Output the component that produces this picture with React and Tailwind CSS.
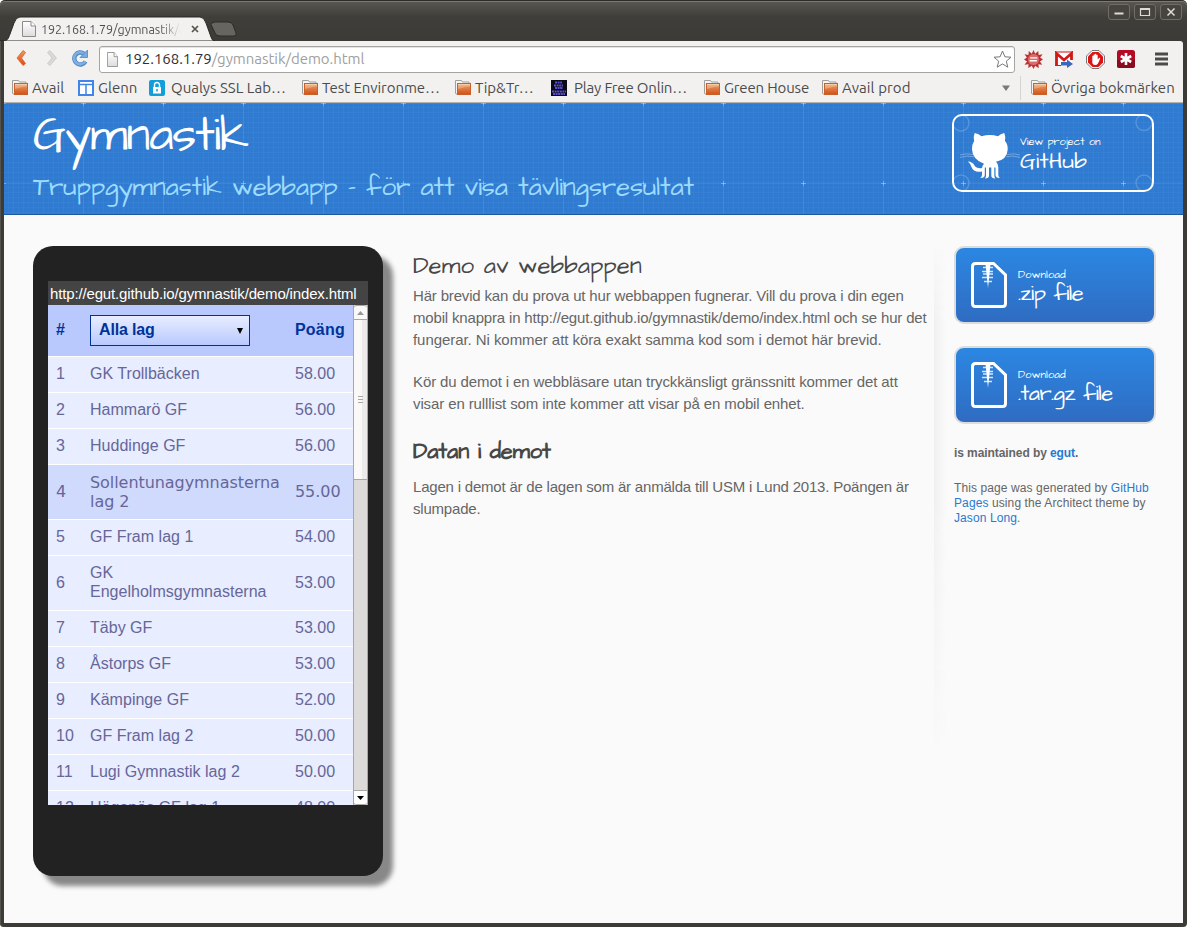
function Folder() {
  return (
    <svg className="size-4 shrink-0" viewBox="0 0 16 16">
      <defs>
        <linearGradient id="folder" x1="0" y1="0" x2="0" y2="1">
          <stop offset="0" stopColor="#eda268" />
          <stop offset="1" stopColor="#d2501a" />
        </linearGradient>
      </defs>
      <path d="M.5 13.500V.5h6l1 1.500h6.500v3M.5 13.500l2 1" fill="#f4f4f4" stroke="#a09f9c" />
      <rect x="2.500" y="3.500" width="13" height="11" fill="url(#folder)" stroke="#c8602a" />
      <path d="M3 4.500h12" stroke="#f8cfa4" />
      <path d="M3 9V5h12v1.500C10 6.500 7 8 3 9z" fill="#fff" opacity=".25" />
    </svg>
  );
}

function PageIcon({ className }) {
  return (
    <svg className={className} viewBox="0 0 14 16" preserveAspectRatio="none">
      <defs>
        <linearGradient id="page" x1="0" y1="0" x2="0" y2="1">
          <stop offset="0" stopColor="#fff" />
          <stop offset="1" stopColor="#dcdcdc" />
        </linearGradient>
      </defs>
      <path d="M.5.5h8.500l4.500 4.500v10.500H.5z" fill="url(#page)" stroke="#8b8b8b" />
      <path d="M9 .5V5h4.500" fill="#fff" stroke="#8b8b8b" />
    </svg>
  );
}

function WindowButton({ children }) {
  return (
    <div className="flex h-4 w-[22px] items-center justify-center rounded-[3px] border border-[#6f6d66] bg-[#45443f]">
      <svg className="h-3 w-4" viewBox="0 0 16 12" fill="none" stroke="#dfdbd2" strokeWidth="1.500">
        {children}
      </svg>
    </div>
  );
}

function TitleBar() {
  return (
    <div className="flex h-[41px] shrink-0 justify-between rounded-t-[5px] border-t border-[#2c2b28] bg-linear-to-b from-[#5a5850] via-[#3f3e39] via-40% to-[#3c3b37] shadow-[inset_0_1px_0_#7b7a76]">
      <div className="relative flex h-[41px] w-[245px]">
        <svg className="absolute top-0 left-0 h-10 w-[245px]" viewBox="0 0 245 40">
          <path d="M211 23.500q1-2.500 4-2.500h13q4 0 5 3l3 8q1 3-2 3h-14q-4 0-5-3z" fill="#66655f" stroke="#2d2c29" />
          <path d="M0 40h4c4-1 4-2 6-7l4-11q2-6 6-6h180q4 0 6 6l5 14q1 4 4 4z" fill="#f2f1f0" stroke="#2a2926" strokeWidth="1" />
        </svg>
        <div className="relative mt-[14px] flex h-[26px] w-full items-center pt-[2px] pl-[22px]">
          <PageIcon className="h-4 w-[14px]" />
          <div className="ml-[5px] w-[140px] overflow-hidden bg-linear-to-r from-[#4c4c4c] from-85% to-transparent bg-clip-text font-['Ubuntu',sans-serif] text-[12.5px] leading-4 tracking-[-0.05px] whitespace-nowrap text-transparent">
            192.168.1.79/gymnastik/demo.html
          </div>
          <svg className="ml-[10px] size-2" viewBox="0 0 8 8" stroke="#55534f" strokeWidth="1.700">
            <path d="M1 1l6 6M7 1L1 7" />
          </svg>
        </div>
      </div>
      <div className="mt-[3px] mr-[5px] flex gap-1">
        <WindowButton><path d="M3.500 7.500h9" strokeWidth="2" /></WindowButton>
        <WindowButton><path d="M3.500 2.500h9v7h-9z M3.500 3.500h9" strokeWidth="1.200" /></WindowButton>
        <WindowButton><path d="M4.500 2.500l7 7M11.500 2.500l-7 7" /></WindowButton>
      </div>
    </div>
  );
}

function Toolbar() {
  return (
    <div className="flex h-9 shrink-0 items-center rounded-tr-[3px] bg-[#f2f1f0] pl-[11px]">
      <svg className="mb-0.5 h-[18px] w-[80px] shrink-0" viewBox="0 0 80 18">
        <defs>
          <linearGradient id="back" x1="0" y1="0" x2="0" y2="1">
            <stop offset="0" stopColor="#ee9a5f" />
            <stop offset="1" stopColor="#dd4814" />
          </linearGradient>
        </defs>
        <path d="M11 1.500L5 9l6 7.500 2.500-2L9.500 9l4-5.500z" fill="url(#back)" transform="translate(-3 0)" stroke="#d9622c" strokeWidth=".8" strokeLinejoin="round" />
        <path d="M35 1.500L41.500 9 35 16.500l-2.500-2L37 9l-4.500-5.500z" fill="#dad9d7" stroke="#c9c8c6" strokeWidth=".8" strokeLinejoin="round" />
        <path d="M70.500 12.500A6 6 0 1 1 69 4.700" fill="none" stroke="#4e86c4" strokeWidth="4.400" />
        <path d="M70.200 12.300A6 6 0 1 1 69 4.700" fill="none" stroke="#80b0e2" strokeWidth="2.600" />
        <path d="M72.500 1v7.500H65z" fill="#78aadd" stroke="#4e86c4" strokeWidth=".8" />
      </svg>
      <div className="ml-1 flex h-[27px] w-[916px] items-center rounded-[3px] border border-[#a5a4a1] bg-white pl-[7px] shadow-[inset_0_1px_0_#e4e4e4]">
        <PageIcon className="h-[15px] w-[11px]" />
        <div className="ml-[7px] flex-1 font-['Ubuntu',sans-serif] text-[15px] leading-5 tracking-[-0.04px] text-[#a0a0a0]">
          <span className="text-[#2f2f2f]">192.168.1.79</span>/gymnastik/demo.html
        </div>
        <svg className="mr-[2px] size-[19px]" viewBox="0 0 19 19">
          <path d="M9.500 1l2.400 5.800 6.100.4-4.700 4 1.500 6-5.300-3.300L4.200 17.200l1.500-6L1 7.200l6.100-.4z" fill="#fff" stroke="#777" strokeLinejoin="round" />
        </svg>
      </div>
      <svg className="ml-[9px] size-[19px]" viewBox="0 0 20 20">
        <path d="M10 0l1.800 4L15 1l.4 4.200 4.200-.7L17 8l3 2-3.200 2 2.400 3.500-4-.5.3 4.300-3.700-2.800L10 20l-1.800-3.500L4.500 19l.3-4-4.300.5L3.200 12 0 10l3-2L.5 4.500l4.200.7L5 1l3.200 3z" fill="#b93232" />
        <circle cx="10" cy="10" r="5.800" fill="#dc6c6a" />
        <path d="M6.500 8.300h7.500M6 11.300h7.500" stroke="#fff" strokeWidth="1.500" />
      </svg>
      <svg className="ml-3 h-[17px] w-[18px]" viewBox="0 0 18 17">
        <path d="M1 1.500h16v13H1z" fill="#fff" />
        <path d="M1.500 15V2.500L9 9l7.500-6.500V9" fill="none" stroke="#d01818" strokeWidth="2.800" />
        <path d="M0 1h18M0 14.500h6" stroke="#d01818" />
        <path d="M6 11h6V8.500l6 4.500-6 4v-2.500H6z" fill="#3b68b8" />
      </svg>
      <svg className="ml-[13px] size-[19px]" viewBox="0 0 19 19">
        <path d="M6 .5h7L18.500 6v7L13 18.500H6L.5 13V6z" fill="#fff" stroke="#777" />
        <path d="M6.500 2h6L17 6.500v6L12.500 17h-6L2 12.500v-6z" fill="#dc1414" />
        <path d="M6.300 9.500V6q.8-.8 1.300 0V4.700q.8-.8 1.400 0V4q.7-.6 1.300 0v1q.8-.6 1.400 0v4.500l1.300-1.500q1-.4 1.200.4L12 13.500q-1 1.500-3 1.500t-2.700-2z" fill="#fff" />
      </svg>
      <svg className="ml-3 size-[18px]" viewBox="0 0 18 18">
        <rect width="18" height="18" rx="2.500" fill="#b30a26" />
        <path d="M0 10h18v5.500a2.500 2.500 0 0 1-2.500 2.500h-13A2.500 2.500 0 0 1 0 15.500z" fill="#8c0a1e" />
        <path d="M9 3v12M3.800 6l10.400 6M14.200 6L3.800 12" stroke="#fff" strokeWidth="2.600" />
      </svg>
      <svg className="ml-5 h-[14px] w-[13px]" viewBox="0 0 13 14" stroke="#4a4a46" strokeWidth="2.800">
        <path d="M0 2h13M0 7h13M0 12h13" />
      </svg>
    </div>
  );
}

function Bookmark({ className, icon, children }) {
  return (
    <div className={"flex shrink-0 items-center gap-1 whitespace-nowrap " + className}>
      {icon}
      <span>{children}</span>
    </div>
  );
}

function BookmarkBar() {
  return (
    <div className="flex h-[26px] shrink-0 items-center border-b border-[#b5b2ae] bg-[#f2f1f0] pb-1 pl-2 font-['Ubuntu',sans-serif] text-[15px] leading-5 text-[#4c4c4c]">
      <Bookmark className="w-[66px]" icon={<Folder />}>Avail</Bookmark>
      <Bookmark className="w-[71px]" icon={
        <svg className="size-4" viewBox="0 0 16 16"><path d="M1 1h14v14H1z" fill="#fff" stroke="#4285e8" strokeWidth="2" /><path d="M1 4.500h14M8 4v11" stroke="#4285e8" strokeWidth="1.500" /></svg>
      }>Glenn</Bookmark>
      <Bookmark className="w-[153px]" icon={
        <svg className="mr-[2px] size-4" viewBox="0 0 16 16"><rect width="16" height="16" rx="2" fill="#119fdc" /><path d="M5.500 7.500V5a2.500 2.500 0 0 1 5 0v2.500" fill="none" stroke="#fff" strokeWidth="1.400" /><rect x="4" y="7" width="8" height="6.500" fill="#fff" /><path d="M8 9v2.500" stroke="#119fdc" strokeWidth="1.500" /></svg>
      }>Qualys SSL Lab…</Bookmark>
      <Bookmark className="w-[153px] tracking-[-0.06px]" icon={<Folder />}>Test Environme…</Bookmark>
      <Bookmark className="w-[96px]" icon={<Folder />}>Tip&amp;Tr…</Bookmark>
      <Bookmark className="w-[153px] tracking-[-0.18px]" icon={
        <svg className="mr-[3px] size-4" viewBox="0 0 16 16"><path d="M0 0h16v16H0z" fill="#0a0a18" /><path d="M4 2.500h7M3 5.500h9M4 8h8M1 11.500h14M2 14h12" stroke="#5a4fd0" strokeWidth="1.800" strokeDasharray="2 .6" /></svg>
      }>Play Free Onlin…</Bookmark>
      <Bookmark className="w-[118px] tracking-[-0.15px]" icon={<Folder />}>Green House</Bookmark>
      <Bookmark className="w-[180px] tracking-[0.1px]" icon={<Folder />}>Avail prod</Bookmark>
      <svg className="h-[6px] w-2 shrink-0" viewBox="0 0 8 6"><path d="M0 .5h8L4 6z" fill="#7a7975" /></svg>
      <div className="mx-[10px] h-6 w-px shrink-0 bg-[#d6d4d2]" />
      <Bookmark className="" icon={<Folder />}>Övriga bokmärken</Bookmark>
    </div>
  );
}

function Blueprint() {
  return (
    <svg className="absolute inset-0 h-full w-full">
      <defs>
        <pattern id="minor" width="10" height="10" patternUnits="userSpaceOnUse">
          <path d="M4.500 0v10M0 4.500h10" stroke="#fff" strokeOpacity=".02" />
          <path d="M9.500 0v10M0 9.500h10" stroke="#fff" strokeOpacity=".03" />
        </pattern>
        <pattern id="major" width="80" height="80" patternUnits="userSpaceOnUse">
          <path d="M79.500 0v80M0 .5h80" stroke="#fff" strokeOpacity=".06" />
          <path d="M77 .5h5M79.500 0v3M0 .5h2M79.500 78v2" stroke="#fff" strokeOpacity=".3" />
        </pattern>
      </defs>
      <rect width="100%" height="100%" fill="url(#minor)" />
      <rect width="100%" height="100%" fill="url(#major)" />
    </svg>
  );
}

function Octocat() {
  return (
    <svg className="mt-[6px] h-[48px] w-[60px] shrink-0" viewBox="0 0 60 48">
      <path d="M0 23q6-2 13-.5M0 25.500q7-2.500 14-.8M60 23q-6-2-13-.5M60 25.500q-7-2.500-14-.8" fill="none" stroke="#fff" strokeOpacity=".4" strokeWidth=".8" />
      <path d="M14.700 1Q19 2 21.500 4.200Q30 2 38 4.200Q40.500 2 44.300 1q1.600 4 .7 8Q48 12.500 47.700 17.500Q47.300 27.500 36 29.800q2.300 2 2.300 5.500v7.500q0 2 1.500 3.200-4.300 0-4.300-3v-7.500h-1.200v8q0 1.500 1 3-4 0-4-3v-8h-2.300v8q0 3-4 3 1-1.500 1-3v-8h-1.200v7.500q0 3-4.500 3 1.700-1.200 1.700-3.200v-3.300q-8.500 1.500-10.500-4.500-.8-3-3.500-5.500 4.500.3 6.500 4 2.200 3.500 7.500 2.600.3-2.500 2-4.300Q12.500 27.500 12 17.500q-.3-5 2.200-8.500Q13 5 14.700 1z" fill="#fff" />
    </svg>
  );
}

function GithubButton() {
  return (
    <a className="relative flex h-[78px] w-[202px] items-center overflow-hidden rounded-[10px] border-2 border-white pl-[6px] text-white">
      <svg className="absolute inset-0 h-full w-full" viewBox="0 0 198 74" fill="none" stroke="#fff" strokeOpacity=".18" strokeWidth="1.500">
        <circle cx="7" cy="7" r="8" /><circle cx="190" cy="6.500" r="8" /><circle cx="7" cy="67" r="8" /><circle cx="190" cy="67" r="8" />
      </svg>
      <Octocat />
      <div className="relative pt-[2px] font-['Architects_Daughter',cursive]">
        <div className="text-[11px] leading-[14px] tracking-[-0.07px]">View project on</div>
        <div className="text-[22.5px] leading-[25px] tracking-[0.2px]">GitHub</div>
      </div>
    </a>
  );
}

function DownloadButton({ name }) {
  return (
    <a className="flex h-[78px] w-[202px] items-center rounded-[10px] border-2 border-[#dcdcdc] bg-linear-to-b from-[#2b87e2] to-[#2f6cc2] pl-[15px] text-white">
      <svg className="h-[46px] w-9 shrink-0" viewBox="0 0 36 46">
        <path d="M4.500 1.500h18L34.500 13v28.500q0 3-3 3h-27q-3 0-3-3v-37q0-3 3-3z" fill="none" stroke="#fff" strokeWidth="3" />
        <path d="M14.500 2h5L17 26z" fill="#fff" />
        <path d="M12 5.500h10M11 9.500h11M12 12h10M11 15.500h11M13 19.500h8" stroke="#fff" strokeOpacity=".8" strokeWidth="1.300" />
      </svg>
      <div className="ml-[11px] pt-1 font-['Architects_Daughter',cursive]">
        <div className="text-[11px] leading-[14px] tracking-[0.1px]">Download</div>
        <div className="text-[22px] leading-6 tracking-[-0.56px]">{name}</div>
      </div>
    </a>
  );
}

const teams = [
  ['1', 'GK Trollbäcken', '58.00'],
  ['2', 'Hammarö GF', '56.00'],
  ['3', 'Huddinge GF', '56.00'],
  ['4', 'Sollentunagymnasterna lag 2', '55.00'],
  ['5', 'GF Fram lag 1', '54.00'],
  ['6', 'GK Engelholmsgymnasterna', '53.00'],
  ['7', 'Täby GF', '53.00'],
  ['8', 'Åstorps GF', '53.00'],
  ['9', 'Kämpinge GF', '52.00'],
  ['10', 'GF Fram lag 2', '50.00'],
  ['11', 'Lugi Gymnastik lag 2', '50.00'],
  ['12', 'Höganäs GF lag 1', '48.00'],
];

function ScrollBar() {
  return (
    <div className="flex w-[15px] shrink-0 flex-col border-x border-[#a9a7a3] bg-[#dcdbd9]">
      <div className="flex h-[15px] shrink-0 items-center justify-center rounded-t-[3px] border-y border-[#a9a7a3] bg-[#faf9f8]">
        <svg className="h-1 w-[7px]" viewBox="0 0 7 4"><path d="M0 4L3.500 0 7 4z" fill="#9a9893" /></svg>
      </div>
      <div className="flex h-40 shrink-0 items-center justify-center border-b border-[#a9a7a3] bg-linear-to-r from-[#faf9f8] from-60% to-[#ecebe9] to-60%">
        <div className="flex flex-col gap-[2px]">
          <div className="h-px w-[5px] bg-[#a9a7a3]" />
          <div className="h-px w-[5px] bg-[#a9a7a3]" />
          <div className="h-px w-[5px] bg-[#a9a7a3]" />
        </div>
      </div>
      <div className="flex-1" />
      <div className="flex h-[15px] shrink-0 items-center justify-center rounded-b-[3px] border-y border-[#a9a7a3] bg-white">
        <svg className="h-1 w-[7px]" viewBox="0 0 7 4"><path d="M0 0h7L3.500 4z" fill="#000" /></svg>
      </div>
    </div>
  );
}

function Phone() {
  return (
    <div className="h-[630px] w-[350px] shrink-0 rounded-[20px] bg-[#222] px-[15px] pt-[35px] shadow-[10px_10px_5px_#888]">
      <div className="flex h-6 items-center bg-[#444] pt-px pl-[2px] text-[15px] leading-5 tracking-[-0.15px] text-white">http://egut.github.io/gymnastik/demo/index.html</div>
      <div className="flex h-[500px] overflow-hidden bg-[#e8edff]">
        <div className="w-[305px] text-base leading-[19px] text-[#666699]">
          <div className="flex h-[51px] bg-[#b9c9fe] pl-2 font-bold text-[#003399]">
            <div className="w-[34px] pt-[15px]">#</div>
            <div className="w-[205px] pt-[10px]">
              <div className="flex h-[31px] w-40 items-center justify-between border border-[#003399] bg-linear-to-b from-[#e8edff] to-[#b9c9fe] pr-[6px] pb-[2px] pl-2">
                <span className="tracking-[-0.15px]">Alla lag</span>
                <svg className="mt-0.5 h-[6px] w-[6px]" viewBox="0 0 6 6"><path d="M0 0h6L3 6z" fill="#000" /></svg>
              </div>
            </div>
            <div className="pt-[15px] tracking-[0.2px]">Poäng</div>
          </div>
          {teams.map(([rank, name, points]) => (
            <div
              key={rank}
              className={
                "flex items-center border-t border-white pt-[7px] pb-[9px] pl-2 " +
                (rank === '4' ? "bg-[#d0dafd] font-['DejaVu_Sans',sans-serif] tracking-[-0.06px]" : "tracking-[0.02px]")
              }
            >
              <div className="w-[34px]">{rank}</div>
              <div className={rank === '4' ? "mt-px -mb-px w-[205px] pr-2" : "w-[205px] pr-2"}>{name}</div>
              <div>{points}</div>
            </div>
          ))}
        </div>
        <ScrollBar />
      </div>
    </div>
  );
}

export default function App() {
  return (
    <div className="flex h-[927px] w-[1187px] flex-col overflow-hidden bg-white font-['Liberation_Sans',Arial,sans-serif]">
      <TitleBar />
      <div className="flex min-h-0 flex-1 flex-col rounded-b-[4px] bg-[#3c3b37] px-1 pb-1 shadow-[inset_1px_0_0_#55534e]">
        <Toolbar />
        <BookmarkBar />
        <header className="relative flex h-[112px] shrink-0 justify-between border-b border-[#1e5ba6] bg-[#2f7bd1] px-[29px]">
          <Blueprint />
          <div className="relative font-['Architects_Daughter',cursive]">
            <h1 className="mt-[9px] text-5xl leading-[48px] tracking-[-1.2px] text-white">Gymnastik</h1>
            <h2 className="mt-[11px] text-[26px] leading-8 tracking-[-0.12px] text-[#9ddcff]">Truppgymnastik webbapp - för att visa tävlingsresultat</h2>
          </div>
          <div className="pt-[11px]"><GithubButton /></div>
        </header>
        <main className="flex flex-1 bg-[#fafafa] pt-[31px] pl-[29px]">
          <Phone />
          <section className="mr-[5px] ml-[30px] w-[516px] shrink-0 text-[15px] leading-[22px] tracking-[-0.17px] text-[#666]">
            <h1 className="mt-[5px] mb-[3px] font-['Architects_Daughter',cursive] text-2xl leading-[31px] tracking-[0.06px] text-[#474747]">Demo av webbappen</h1>
            <p className="mb-5">Här brevid kan du prova ut hur webbappen fugnerar. Vill du prova i din egen mobil knappra in http://egut.github.io/gymnastik/demo/index.html och se hur det <span className="tracking-[-0.06px]">fungerar. Ni kommer att köra exakt samma kod som i demot här brevid.</span></p>
            <p className="mb-5 tracking-[-0.11px]">Kör du demot i en webbläsare utan tryckkänsligt gränssnitt kommer det att visar en rulllist som inte kommer att visar på en mobil enhet.</p>
            <h3 className="mt-[21px] mb-[9px] font-['Architects_Daughter',cursive] text-[22px] leading-[31px] font-bold tracking-[-0.1px] text-[#474747]">Datan i demot</h3>
            <p className="tracking-[-0.2px]">Lagen i demot är de lagen som är anmälda till USM i Lund 2013. Poängen är slumpade.</p>
          </section>
          <div className="h-[510px] w-3 shrink-0 bg-linear-to-r from-[#f0f0f0] to-[#fafafa] mask-t-from-85% mask-b-from-50%" />
          <aside className="ml-2 w-[202px] text-xs leading-[15px] text-[#666]">
            <div className="flex flex-col gap-[22px]">
              <DownloadButton name=".zip file" />
              <DownloadButton name=".tar.gz file" />
            </div>
            <p className="mt-[22px] font-bold tracking-[-0.08px]">is maintained by <a className="text-[#2879d0]">egut</a>.</p>
            <p className="mt-5 tracking-[0.1px]">This page was generated by <a className="text-[#2879d0]">GitHub Pages</a> using the Architect theme by <a className="text-[#2879d0]">Jason Long</a>.</p>
          </aside>
        </main>
      </div>
    </div>
  );
}
